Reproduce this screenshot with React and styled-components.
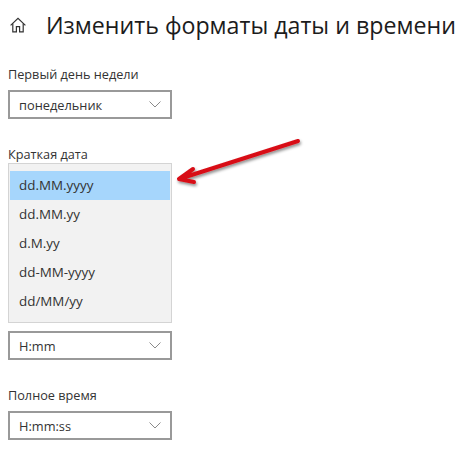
import React from "react";
import styled, { createGlobalStyle } from "styled-components";

const GlobalStyle = createGlobalStyle`
  html, body {
    margin: 0;
    background: #fff;
  }
  body {
    font-family: "Open Sans", "Noto Sans", sans-serif;
    color: #222;
  }
`;

const Page = styled.div`
  position: relative;
  width: 474px;
  height: 455px;
  overflow: hidden;
  padding: 0 8px;
  box-sizing: border-box;
`;

const Header = styled.header`
  display: flex;
  align-items: center;
  height: 50px;
  padding-left: 2px;

  svg {
    flex-shrink: 0;
  }
`;

const Title = styled.h1`
  margin: 0 0 0 20px;
  font-size: 23.2px;
  font-weight: 400;
  color: #1c1c1c;
  white-space: nowrap;
`;

const Field = styled.section`
  display: flex;
  flex-direction: column;
  width: 164px;
  margin-top: ${(p) => p.$top}px;
`;

const Label = styled.label`
  font-size: 12.7px;
  line-height: 17px;
  color: #333;
  margin-bottom: ${(p) => p.$gap ?? 7}px;
`;

const Select = styled.div`
  display: flex;
  align-items: center;
  justify-content: space-between;
  height: 29px;
  box-sizing: border-box;
  padding: 0 9px 0 9px;
  border: 2px solid #999;
  background: #fff;
  font-size: 12.8px;
  color: #333;
`;

const Dropdown = styled.ul`
  list-style: none;
  margin: 0;
  padding: 7px 1px 8px;
  height: 160px;
  box-sizing: border-box;
  background: #f2f2f2;
  border: 1px solid #d4d4d4;
`;

const Option = styled.li`
  display: flex;
  align-items: center;
  height: 29px;
  box-sizing: border-box;
  padding: 0 0 2px 9px;
  font-size: 13.4px;
  color: #333;
  background: ${(p) => (p.$active ? "#a6d6fc" : "transparent")};
`;

const ArrowOverlay = styled.svg`
  position: absolute;
  left: 170px;
  top: 130px;
`;

const HomeIcon = () => (
  <svg width="16" height="16" viewBox="0 0 16 16" fill="none" stroke="#333" strokeWidth="1.2">
    <path d="M.6 8.4 8 1.4l7.4 7" />
    <path d="M2.8 6.6v8.2h3.6V9.6h3.2v5.2h3.6V6.6" />
  </svg>
);

const Chevron = () => (
  <svg width="12" height="7" viewBox="0 0 12 7" fill="none" stroke="#8a8a8a" strokeWidth="1">
    <path d="M.5.5 6 6l5.5-5.5" />
  </svg>
);

const shortDates = ["dd.MM.yyyy", "dd.MM.yy", "d.M.yy", "dd-MM-yyyy", "dd/MM/yy"];

export default function App() {
  return (
    <Page>
      <GlobalStyle />
      <Header>
        <HomeIcon />
        <Title>Изменить форматы даты и времени</Title>
      </Header>
      <Field $top={16}>
        <Label>Первый день недели</Label>
        <Select>
          понедельник
          <Chevron />
        </Select>
      </Field>
      <Field $top={27}>
        <Label $gap={0}>Краткая дата</Label>
        <Dropdown>
          {shortDates.map((item, i) => (
            <Option key={item} $active={i === 0}>
              {item}
            </Option>
          ))}
        </Dropdown>
      </Field>
      <Field $top={8}>
        <Select>
          H:mm
          <Chevron />
        </Select>
      </Field>
      <Field $top={27}>
        <Label>Полное время</Label>
        <Select>
          H:mm:ss
          <Chevron />
        </Select>
      </Field>
      <ArrowOverlay width="140" height="70" viewBox="0 0 140 70">
        <defs>
          <filter id="arrowShadow" x="-20%" y="-40%" width="140%" height="190%">
            <feDropShadow dx="1" dy="2" stdDeviation="1.5" floodColor="#000" floodOpacity="0.45" />
          </filter>
        </defs>
        <path
          d="M128 11 L9 49 M23 39 L9 49 L24 52"
          fill="none"
          stroke="#d80f18"
          strokeWidth="4"
          strokeLinecap="round"
          strokeLinejoin="round"
          filter="url(#arrowShadow)"
        />
      </ArrowOverlay>
    </Page>
  );
}
